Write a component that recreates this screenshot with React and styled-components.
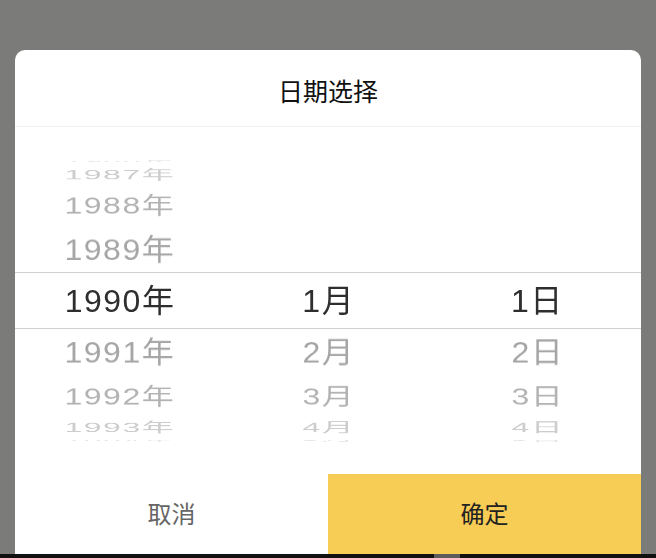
import styled, { createGlobalStyle } from "styled-components";

const GlobalStyle = createGlobalStyle`
  html, body {
    margin: 0;
    padding: 0;
    background: #7b7b79;
  }
  body {
    font-family: "Liberation Sans", "Noto Sans CJK SC", sans-serif;
  }
`;

const STEP = 21.5;
const RADIUS = 140;
const SHADES = ["#2e2e2e", "#a6a6a6", "#b3b3b3", "#cdcdcd", "#e6e6e6"];

const Page = styled.div`
  height: 558px;
  display: flex;
  flex-direction: column;
`;

const Overlay = styled.div`
  flex: 1;
  display: flex;
  flex-direction: column;
  padding: 50px 15px 0;
  min-height: 0;
`;

const Sheet = styled.div`
  flex: 1;
  display: flex;
  flex-direction: column;
  background: #fff;
  border-radius: 10px 10px 0 0;
  overflow: hidden;
`;

const Header = styled.div`
  height: 77px;
  box-sizing: border-box;
  padding-top: 4px;
  display: flex;
  align-items: center;
  justify-content: center;
  border-bottom: 1px solid #f1f1f1;
  font-size: 25px;
  color: #111;
`;

const Picker = styled.div`
  position: relative;
  height: 347px;
  display: grid;
  grid-template-columns: repeat(3, 1fr);
  align-items: center;
`;

const Band = styled.div`
  position: absolute;
  left: 0;
  right: 0;
  top: 145px;
  height: 57px;
  box-sizing: border-box;
  border-top: 1px solid #cfcfcf;
  border-bottom: 1px solid #cfcfcf;
  pointer-events: none;
`;

const Wheel = styled.div`
  height: 286px;
  overflow: hidden;
  display: grid;
  place-items: center;
`;

const Item = styled.div`
  grid-area: 1 / 1;
  height: 50px;
  line-height: 50px;
  font-size: 32px;
  letter-spacing: 1.5px;
  padding-left: 1.5px;
  white-space: nowrap;
  color: ${(p) => SHADES[Math.abs(p.$k)]};
  transform: rotateX(${(p) => -p.$k * STEP}deg) translateZ(${RADIUS}px);
  backface-visibility: hidden;
`;

const Actions = styled.div`
  height: 80px;
  display: grid;
  grid-template-columns: 1fr 1fr;
`;

const Action = styled.button`
  border: none;
  margin: 0;
  padding: 0 0 4px;
  font-family: inherit;
  font-size: 24px;
  background: ${(p) => (p.$primary ? "#f8cd55" : "#fff")};
  color: ${(p) => (p.$primary ? "#222" : "#666")};
`;

const BottomBar = styled.div`
  height: 4px;
  background: #111;
  display: flex;
`;

const Grip = styled.div`
  width: 26px;
  margin-left: 434px;
  background: #5c5c5c;
`;

const columns = [
  { from: -4, label: (k) => `${1990 + k}年` },
  { from: 0, label: (k) => `${1 + k}月` },
  { from: 0, label: (k) => `${1 + k}日` },
];

const Column = ({ from, label }) => {
  const rows = [];
  for (let k = from; k <= 4; k++) rows.push(k);
  return (
    <Wheel>
      {rows.map((k) => (
        <Item key={k} $k={k}>
          {label(k)}
        </Item>
      ))}
    </Wheel>
  );
};

const App = () => {
  return (
    <Page>
      <GlobalStyle />
      <Overlay>
        <Sheet>
          <Header>日期选择</Header>
          <Picker>
            {columns.map((c, i) => (
              <Column key={i} from={c.from} label={c.label} />
            ))}
            <Band />
          </Picker>
          <Actions>
            <Action>取消</Action>
            <Action $primary>确定</Action>
          </Actions>
        </Sheet>
      </Overlay>
      <BottomBar>
        <Grip />
      </BottomBar>
    </Page>
  );
};

export default App;
